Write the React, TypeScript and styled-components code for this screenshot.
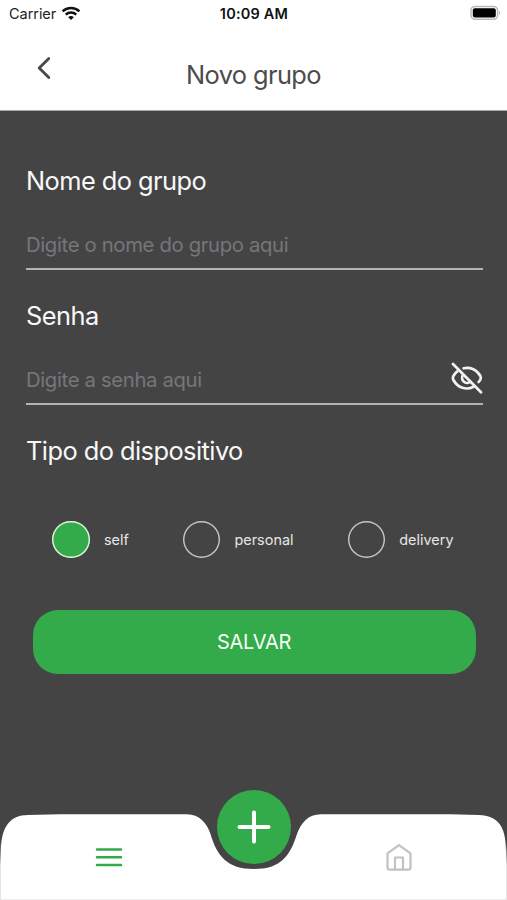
import React, { useState } from "react";
import styled, { createGlobalStyle } from "styled-components";

const GREEN = "#34ab4b";
const DARK = "#444444";

const GlobalStyle = createGlobalStyle`
  * { box-sizing: border-box; }
  body { margin: 0; background: ${DARK}; font-family: Inter, "Liberation Sans", sans-serif; }
  button, input { font-family: inherit; border: 0; padding: 0; background: none; }
`;

const Screen = styled.div`
  width: 507px;
  height: 900px;
  display: flex;
  flex-direction: column;
  background: ${DARK};
  overflow: hidden;
`;

const StatusBar = styled.div`
  height: 28px;
  flex: none;
  display: grid;
  grid-template-columns: 1fr auto 1fr;
  align-items: center;
  padding: 0 6px 0 9px;
  background: #fff;
  color: #111;
`;

const Carrier = styled.div`
  display: flex;
  align-items: center;
  gap: 5px;
  font-size: 14.5px;
  line-height: 28px;
  letter-spacing: -0.05px;
  color: #222;
  svg { margin-top: -2px; }
`;

const Clock = styled.div`
  font-size: 14.5px;
  font-weight: 600;
  line-height: 28px;
  letter-spacing: 0.2px;
  margin-right: 2px;
`;

const Battery = styled.svg`
  justify-self: end;
  margin-top: -2px;
`;

const Header = styled.header`
  height: 83px;
  flex: none;
  display: grid;
  grid-template-columns: 88px 1fr 88px;
  background: #fff;
  border-bottom: 1px solid #a8a8a8;
`;

const BackButton = styled.button`
  height: 80px;
  display: flex;
  align-items: center;
  justify-content: center;
`;

const Title = styled.h1`
  margin: 0;
  text-align: center;
  font-size: 25.4px;
  font-weight: 400;
  line-height: 32px;
  padding-top: 31px;
  letter-spacing: -0.6px;
  color: #4c4c4e;
`;

const Form = styled.form`
  flex: 1;
  padding: 52px 24px 0 26px;
`;

const Label = styled.label`
  display: block;
  font-size: 25.4px;
  line-height: 36px;
  height: 36px;
  letter-spacing: -0.55px;
  color: #f8f8f8;
`;

const Field = styled.div`
  height: 71px;
  margin-bottom: 28px;
  padding-top: 21px;
  display: flex;
  align-items: center;
  border-bottom: 2px solid #b4b2b2;
`;

const Input = styled.input`
  flex: 1;
  min-width: 0;
  height: 30px;
  outline: none;
  font-size: 20.3px;
  letter-spacing: -0.34px;
  color: #f8f8f8;
  &::placeholder { color: #76767a; opacity: 1; }
`;

const EyeButton = styled.button`
  display: flex;
  height: 32px;
  margin-top: -2px;
`;

const Options = styled.div`
  display: flex;
  gap: 54px;
  padding: 51.5px 0 0 26.3px;
`;

const Option = styled.button`
  display: flex;
  align-items: center;
  gap: 14px;
  font-size: 14.4px;
  letter-spacing: 0.03px;
  color: #e6e6e6;
`;

const Dot = styled.span<{ $on: boolean }>`
  width: 37.6px;
  height: 37.6px;
  border-radius: 50%;
  box-shadow: inset 0 0 0 1.4px ${(p) => (p.$on ? "#e4f2df" : "#c8c8c8")};
  background: ${(p) => (p.$on ? GREEN : "transparent")};
`;

const SaveButton = styled.button`
  display: block;
  width: 443px;
  height: 64px;
  margin: 52px 0 0 6.5px;
  border-radius: 25px;
  background: ${GREEN};
  color: #f4fff4;
  font-size: 20px;
  letter-spacing: -0.25px;
`;

const TabBar = styled.nav`
  position: relative;
  flex: none;
  height: 110px;
`;

const TabShape = styled.svg`
  position: absolute;
  inset: 0;
`;

const Tabs = styled.div`
  position: relative;
  display: grid;
  grid-template-columns: 217px 74px 216px;
  height: 110px;
`;

const Tab = styled.button`
  display: flex;
  justify-content: center;
  align-items: flex-start;
  padding-top: 51px;
`;

const AddButton = styled.button`
  width: 74px;
  height: 74px;
  border-radius: 50%;
  background: ${GREEN};
  display: flex;
  align-items: center;
  justify-content: center;
`;

const kinds = ["self", "personal", "delivery"];

export default function App() {
  const [kind, setKind] = useState("self");
  const [hidden, setHidden] = useState(true);
  return (
    <Screen>
      <GlobalStyle />
      <StatusBar>
        <Carrier>
          Carrier
          <svg width="20" height="15" viewBox="0 0 20 15" fill="none" stroke="#111" strokeWidth="2.5">
            <path d="M1.6 5.3C6.3.8 13.7.8 18.4 5.3" />
            <path d="M4.7 8.6C7.7 5.8 12.3 5.8 15.3 8.6" />
            <path d="M7.2 11.2C8.8 9.7 11.2 9.7 12.8 11.2L10 14z" fill="#111" stroke="none" />
          </svg>
        </Carrier>
        <Clock>10:09 AM</Clock>
        <Battery width="31" height="16" viewBox="0 0 31 16">
          <rect x="1" y="1.4" width="26.6" height="12.9" rx="4" fill="#fff" stroke="#b9b9b9" strokeWidth="1.5" />
          <rect x="2.8" y="3.2" width="23" height="9.3" rx="2" fill="#000" />
          <path d="M29 5.7q1.8 2 0 4.3z" fill="#aaa" />
        </Battery>
      </StatusBar>
      <Header>
        <BackButton type="button" aria-label="Voltar">
          <svg width="14" height="24" viewBox="0 0 14 24" fill="none" stroke="#48484a" strokeWidth="2.8" strokeLinecap="round" strokeLinejoin="round">
            <path d="M11.8 2.5L2.2 12L11.8 21.5" />
          </svg>
        </BackButton>
        <Title>Novo grupo</Title>
      </Header>
      <Form onSubmit={(e) => e.preventDefault()}>
        <Label htmlFor="name">Nome do grupo</Label>
        <Field>
          <Input id="name" placeholder="Digite o nome do grupo aqui" />
        </Field>
        <Label htmlFor="password">Senha</Label>
        <Field>
          <Input id="password" type={hidden ? "password" : "text"} placeholder="Digite a senha aqui" />
          <EyeButton type="button" aria-label="Mostrar senha" onClick={() => setHidden(!hidden)}>
            <svg width="32" height="32" viewBox="0 0 32 32" fill="none" stroke="#f2f2f2" strokeWidth="2.7" strokeLinecap="round" strokeLinejoin="round">
              <path d="M2 2L30 30.2" />
              <path d="M12.6 6.3C19.5 4.7 25.8 7.8 29.4 14Q30.4 16 29.2 18L27.6 20" />
              <path d="M6.3 9.4Q4 11.2 2.4 14Q1.4 16 2.4 18C7 26.2 15.5 28.4 22.5 24.8" />
              <path d="M12.1 12.8A5.1 5.1 0 0 0 19.4 19.8" />
            </svg>
          </EyeButton>
        </Field>
        <Label as="div">Tipo do dispositivo</Label>
        <Options>
          {kinds.map((k) => (
            <Option key={k} type="button" onClick={() => setKind(k)}>
              <Dot $on={kind === k} />
              {k}
            </Option>
          ))}
        </Options>
        <SaveButton type="submit">SALVAR</SaveButton>
      </Form>
      <TabBar>
        <TabShape width="507" height="110" viewBox="0 0 507 110">
          <defs>
            <linearGradient id="edge" x1="0" y1="0" x2="0" y2="1">
              <stop offset="0" stopColor="#e4e4e4" stopOpacity="0" />
              <stop offset="0.4" stopColor="#e4e4e4" />
            </linearGradient>
          </defs>
          <path
            fill="#fff"
            d="M1 110V61C1 37 10 25 28 25L60 24.3H187C199 24.3 207 33 210.5 44C217 66 227 79 254 79C281 79 290 66 297 44C301 33 308 24.3 321 24.3H450L479 25C498 26 506 36 506 61V110Z"
          />
          <rect x="0" y="52" width="1" height="58" fill="url(#edge)" />
          <rect x="506" y="52" width="1" height="58" fill="url(#edge)" />
          <path d="M1 109.5H506" stroke="#ececec" />
        </TabShape>
        <Tabs>
          <Tab type="button" aria-label="Menu">
            <svg width="28" height="32" viewBox="0 0 28 32" stroke={GREEN} strokeWidth="2.5" strokeLinecap="round">
              <path d="M2 8.4H26M2 16.2H26M2 24.1H26" />
            </svg>
          </Tab>
          <AddButton type="button" aria-label="Adicionar">
            <svg width="36" height="36" viewBox="0 0 36 36" stroke="#fff" strokeWidth="4" strokeLinecap="round">
              <path d="M18 3.5V32.5M3.5 18H32.5" />
            </svg>
          </AddButton>
          <Tab type="button" aria-label="Início">
            <svg width="28" height="32" viewBox="0 0 28 32" fill="none" stroke="#c2c2c2" strokeWidth="2.2" strokeLinejoin="round">
              <path d="M2.5 12.3L14 4.2L25.5 12.3V26.5Q25.5 28.7 23.3 28.7H4.7Q2.5 28.7 2.5 26.5Z" />
              <path d="M10 28.7V16.5H18V28.7" />
            </svg>
          </Tab>
        </Tabs>
      </TabBar>
    </Screen>
  );
}
